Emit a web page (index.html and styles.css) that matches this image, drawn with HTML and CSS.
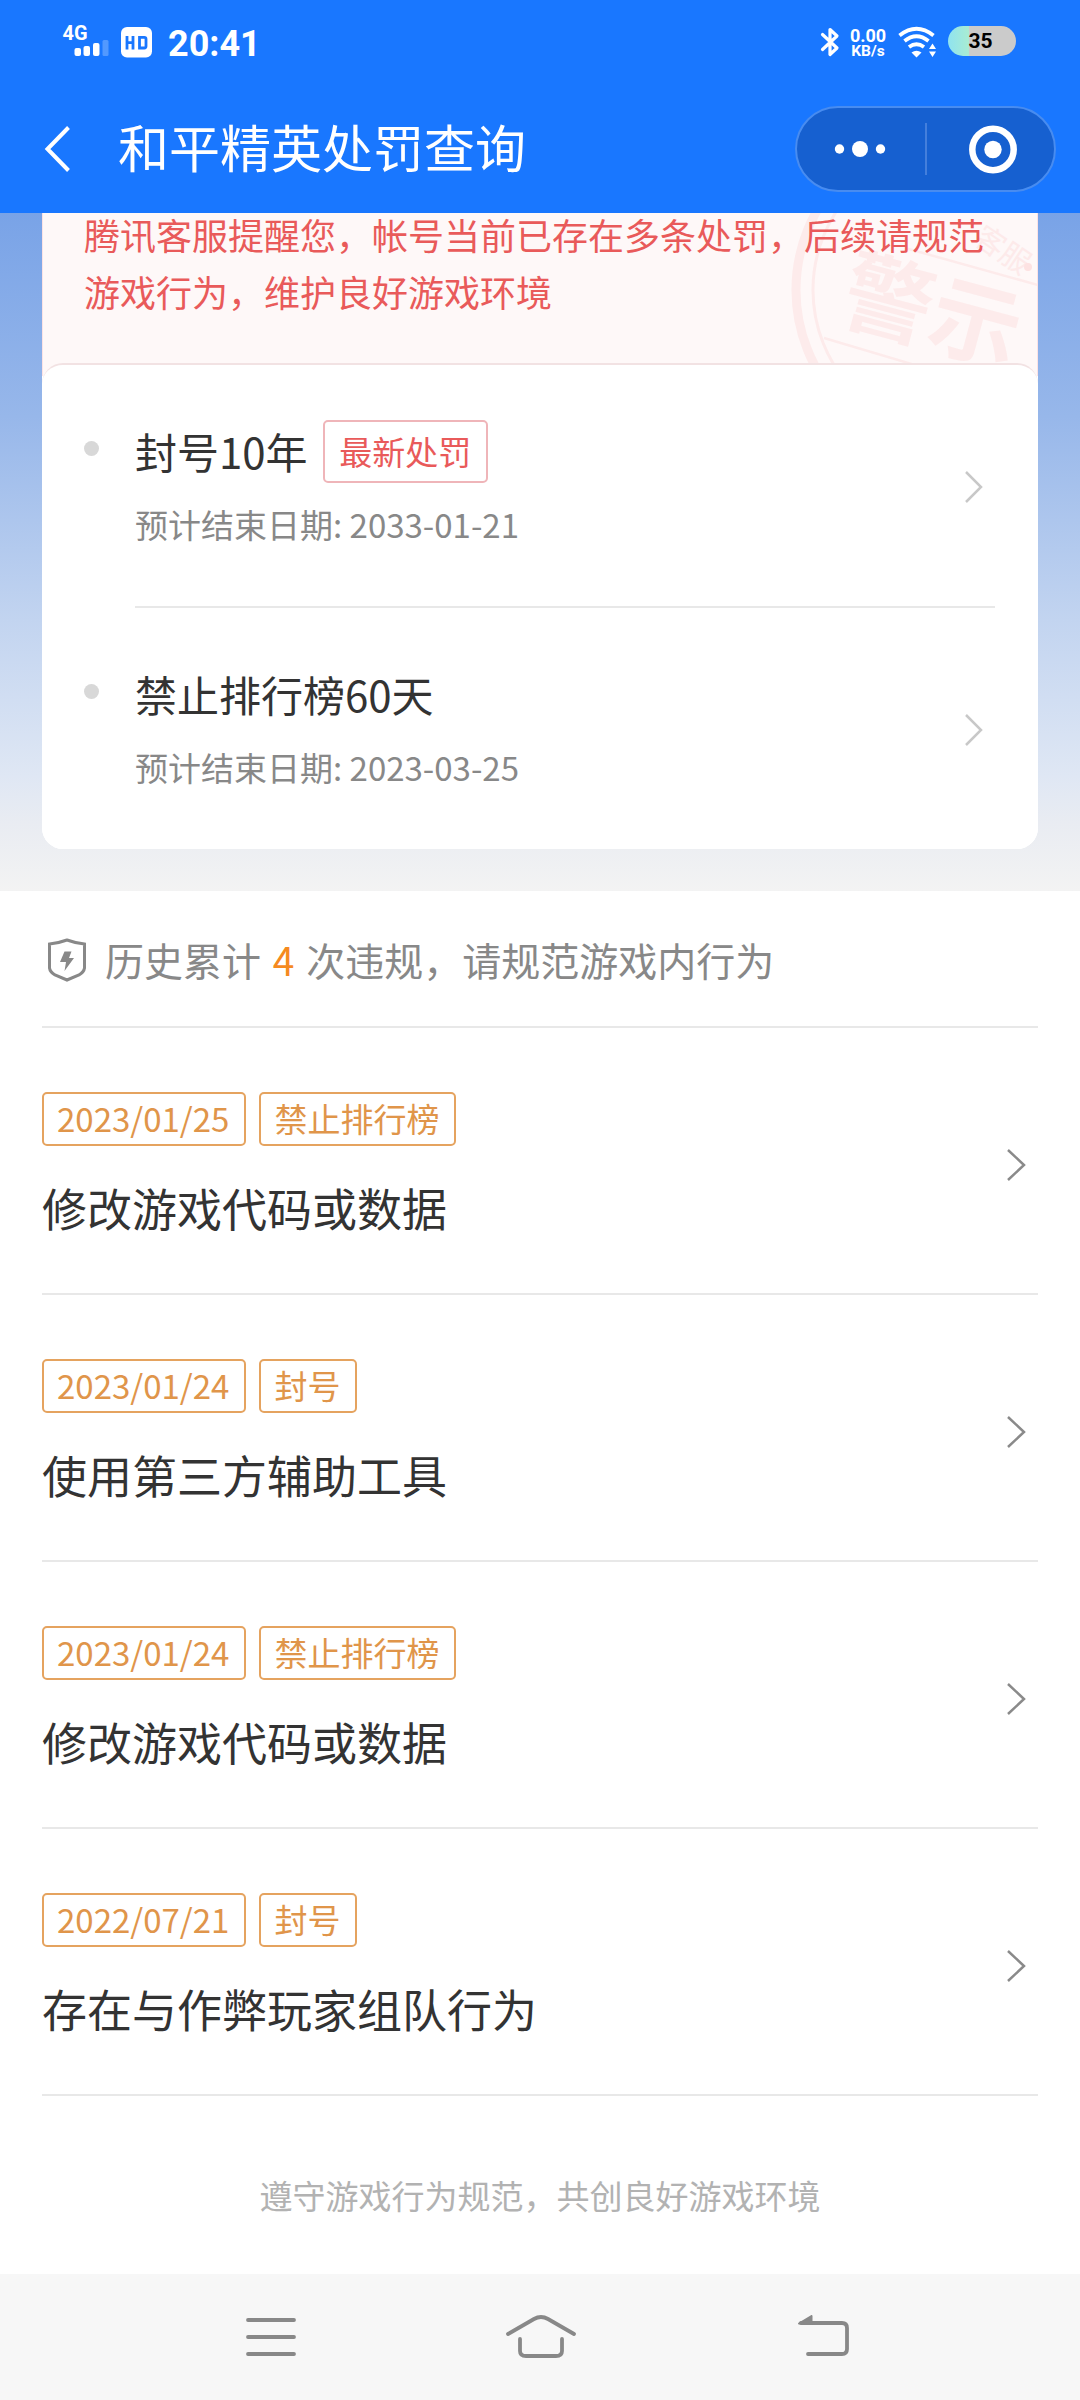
FILE: index.html
```html
<!DOCTYPE html>
<html lang="zh-CN">
<head>
<meta charset="utf-8">
<title>和平精英处罚查询</title>
<link rel="stylesheet" href="styles.css">
</head>
<body>
<div class="screen">
  <header class="header">
    <div class="status">
      <div class="status-left">
        <svg class="signal" width="47" height="44" viewBox="0 -6 47 44">
          <text class="signal-label" x="0.500" y="15" textLength="25" lengthAdjust="spacingAndGlyphs">4G</text>
          <g fill="#fff"><rect x="12.500" y="23" width="6.500" height="8" rx="2"/><rect x="21.500" y="21" width="6.500" height="10" rx="2"/><rect x="31" y="18" width="6.500" height="13" rx="2"/><rect x="40.500" y="15" width="6" height="16" rx="1.500" opacity=".25"/></g>
        </svg>
        <svg class="hd" width="31" height="31" viewBox="0 0 31 31">
          <rect width="31" height="30.500" rx="6" fill="#fff"/>
          <path d="M6 9v13.500M12 9v13.500M6 15.700h6M18.500 10.400h4.800q1.700 0 1.700 1.700v7.200q0 1.700-1.700 1.700h-4.800z" fill="none" stroke="#1977ff" stroke-width="2.800"/>
        </svg>
        <span class="clock">20:41</span>
      </div>
      <div class="status-right">
        <svg width="20" height="32" viewBox="0 0 20 32"><path d="M2.500 8.500L17 22l-7 6.500V3.500L17 10 2.500 23.500" fill="none" stroke="#fff" stroke-width="3.200" stroke-linejoin="round" stroke-linecap="round"/></svg>
        <div class="speed"><span class="speed-num">0.00</span><span class="speed-unit">KB/s</span></div>
        <svg class="wifi" width="40" height="32" viewBox="0 0 40 32">
          <g fill="none" stroke="#fff" stroke-width="3.800"><path d="M1.500 9.500Q18.500-4 35.500 9.500"/><path d="M6.500 15Q18.500 5.500 30.500 15"/><path d="M11 21Q18.500 15.500 26 21"/></g>
          <path d="M13.500 26.500q5-3.500 10 0L18.500 31.500z" fill="#fff"/>
          <path d="M31 23l3.500-5.500L38 23zM31 25.500h7L34.500 31z" fill="#fff"/>
        </svg>
        <span class="battery">35</span>
      </div>
    </div>
    <div class="titlebar">
      <svg class="back" width="28" height="50" viewBox="0 0 28 50"><path d="M24.500 3.500L3.500 25l21 21.500" fill="none" stroke="#fff" stroke-width="4"/></svg>
      <h1 class="title">和平精英处罚查询</h1>
      <div class="capsule">
        <svg width="128" height="84" viewBox="0 0 128 84" fill="#fff"><circle cx="42.500" cy="42" r="4.700"/><circle cx="63" cy="42" r="8"/><circle cx="83.500" cy="42" r="4.700"/></svg>
        <span class="capsule-line"></span>
        <svg width="126" height="84" viewBox="0 0 126 84"><circle cx="66" cy="42.500" r="20.700" fill="none" stroke="#fff" stroke-width="6.500"/><circle cx="66" cy="42.500" r="8.700" fill="#fff"/></svg>
      </div>
    </div>
  </header>

  <section class="hero">
    <div class="panel">
      <div class="notice">
        <svg class="stamp" width="250" height="150" viewBox="788 213 250 150">
          <g fill="none" stroke="#fdebeb">
            <circle cx="957" cy="290" r="161" stroke-width="9"/>
            <circle cx="957" cy="290" r="144" stroke-width="3"/>
            <path d="M905 248L1038 285M824 338L925 368" stroke-width="2.500"/>
          </g>
          <text x="842" y="344" class="stamp-big" transform="rotate(15 932 312)">警示</text>
          <text class="stamp-small" transform="translate(972 242) rotate(34)">客服</text>
          <circle cx="1028" cy="267" r="4" fill="#fde2e2"/>
        </svg>
        <p class="notice-text">腾讯客服提醒您，帐号当前已存在多条处罚，后续请规范<br>游戏行为，维护良好游戏环境</p>
      </div>
      <div class="card">
        <div class="penalty">
          <i class="bullet"></i>
          <div class="penalty-body">
            <div class="penalty-name">封号10年<span class="latest">最新处罚</span></div>
            <div class="penalty-date">预计结束日期: 2033-01-21</div>
          </div>
          <svg class="penalty-arrow" width="20" height="34" viewBox="0 0 20 34"><path d="M2 2l15 15L2 32" /></svg>
        </div>
        <div class="penalty">
          <i class="bullet"></i>
          <div class="penalty-body">
            <div class="penalty-name">禁止排行榜60天</div>
            <div class="penalty-date">预计结束日期: 2023-03-25</div>
          </div>
          <svg class="penalty-arrow" width="20" height="34" viewBox="0 0 20 34"><path d="M2 2l15 15L2 32" /></svg>
        </div>
      </div>
    </div>
  </section>

  <main class="history">
    <div class="summary">
      <svg class="shield" width="40" height="44" viewBox="0 0 40 44"><path d="M20 2Q28 5 37.500 6V30Q37 34 32 37L20 42 8 37Q3 34 2.500 30V6Q12 5 20 2z" fill="none" stroke="#888" stroke-width="3"/><path d="M17.500 13.500h7l-2.500 6.500h5L17.500 33l1.500-9h-6z" fill="#888"/></svg>
      <span class="summary-text">历史累计 <b class="count">4</b> 次违规，请规范游戏内行为</span>
    </div>
    <div class="record">
      <div><div class="tags"><span class="tag">2023/01/25</span><span class="tag">禁止排行榜</span></div><div class="reason">修改游戏代码或数据</div></div>
      <svg class="record-arrow" width="22" height="34" viewBox="0 0 22 34"><path d="M2 2l16 15L2 32"/></svg>
    </div>
    <div class="record">
      <div><div class="tags"><span class="tag">2023/01/24</span><span class="tag">封号</span></div><div class="reason">使用第三方辅助工具</div></div>
      <svg class="record-arrow" width="22" height="34" viewBox="0 0 22 34"><path d="M2 2l16 15L2 32"/></svg>
    </div>
    <div class="record">
      <div><div class="tags"><span class="tag">2023/01/24</span><span class="tag">禁止排行榜</span></div><div class="reason">修改游戏代码或数据</div></div>
      <svg class="record-arrow" width="22" height="34" viewBox="0 0 22 34"><path d="M2 2l16 15L2 32"/></svg>
    </div>
    <div class="record">
      <div><div class="tags"><span class="tag">2022/07/21</span><span class="tag">封号</span></div><div class="reason">存在与作弊玩家组队行为</div></div>
      <svg class="record-arrow" width="22" height="34" viewBox="0 0 22 34"><path d="M2 2l16 15L2 32"/></svg>
    </div>
    <p class="slogan">遵守游戏行为规范，共创良好游戏环境</p>
  </main>

  <nav class="navbar">
    <svg width="50" height="44" viewBox="0 0 50 44"><path d="M2 5h46M2 22h46M2 39h46"/></svg>
    <svg width="70" height="44" viewBox="0 0 70 44"><path d="M2 19L28 4Q35 0 42 4L68 19M14 24V36Q14 41 20 41H50Q56 41 56 36V24"/></svg>
    <svg width="51" height="44" viewBox="0 0 51 44"><path d="M3 8H44Q49 8 49 13V34Q49 39 44 39H10"/><path d="M1 8.500L13.500 1v7.500z" stroke-width="2" fill="#888"/></svg>
  </nav>
</div>
</body>
</html>
```
FILE: styles.css
```css
* { box-sizing: border-box; }
body, h1, p { margin: 0; }
svg { display: block; flex: none; }
body { font-family: "Noto Sans CJK SC", sans-serif; color: #333; background: #fff; }
.screen { width: 1080px; height: 2400px; display: flex; flex-direction: column; overflow: hidden; }

.header { height: 213px; flex: none; background: #1977ff; color: #fff; }
.status { height: 84px; display: flex; justify-content: space-between; padding: 0 64px 0 62px; font-family: Roboto, sans-serif; font-weight: 700; }
.status-left, .status-right { display: flex; align-items: center; }
.signal { margin-bottom: 3px; }
.signal-label { font-size: 21px; fill: #fff; }
.hd { margin-left: 12px; }
.clock { margin-left: 16px; font-size: 36px; line-height: 42px; margin-top: 3px; }
.speed { display: flex; flex-direction: column; align-items: center; margin: 0 12px 0 10px; width: 36px; }
.speed-num { font-size: 18px; line-height: 17px; }
.speed-unit { font-size: 15.500px; line-height: 14px; }
.wifi { margin-right: 10px; }
.battery { width: 68px; height: 30px; margin-top: -2px; border-radius: 15px; background: linear-gradient(90deg, #8fe3f0 0, #a9ecd2 21px, #cbcbcb 21px); color: #000; font-size: 21px; line-height: 30px; text-align: center; padding-right: 3px; }

.titlebar { height: 129px; display: flex; align-items: center; padding: 0 24px 0 44px; }
.title { margin-left: 46px; font-size: 51px; font-weight: 400; line-height: 74px; margin-top: -6px; }
.capsule { margin-left: auto; width: 261px; height: 86px; border: 2px solid #488cf0; border-radius: 43px; background: #1660d0; display: flex; align-items: center; }
.capsule-line { width: 1.500px; height: 52px; background: #447fdc; }

.hero { height: 678px; flex: none; padding: 0 42px; background: linear-gradient(#79a3e7 0, #97b7ea 30%, #c2d4f0 60%, #dfe7f4 83%, #e9ecf2 90%, #f3f3f3 100%); }
.panel { height: 636px; background: #fff; border-radius: 0 0 21px 21px; }
.notice { height: 163px; background: #fef8f8; border: solid #fbe2e4; border-width: 0 1.500px; overflow: hidden; position: relative; }
.stamp { position: absolute; right: -1px; top: 0; }
.stamp-big { font-size: 90px; font-weight: 700; fill: #fdebeb; }
.stamp-small { font-size: 30px; fill: #fdeaea; }
.notice-text { position: relative; margin-top: -7px; padding-left: 41px; font-size: 36px; line-height: 56.500px; color: #e95a5a; white-space: nowrap; }
.card { position: relative; margin-top: -13px; height: 486px; border-top: 2px solid #f2e2e3; border-radius: 21px; background: #fff; padding: 0 42px; }
.penalty { height: 243px; display: flex; align-items: flex-start; }
.bullet { width: 15px; height: 15px; border-radius: 50%; background: #d8d8d8; margin: 76px 36px 0 0; }
.penalty-body { flex: 1; height: 243px; padding-top: 55px; }
.penalty:first-child .penalty-body { border-bottom: 2px solid #e8e8e8; }
.penalty-name { height: 63px; display: flex; align-items: center; font-size: 42px; line-height: 60px; padding-bottom: 1px; }
.latest { height: 63px; width: 165px; margin: 1px 0 0 15px; border: 2px solid #efb5b9; border-radius: 5px; color: #e95a5a; font-size: 33px; line-height: 59px; text-align: center; }
.penalty-date { margin-top: 17px; font-size: 33px; line-height: 48px; color: #888; }
.penalty-arrow { margin: 105px 12px 0 -31px; stroke: #c8c8c8; stroke-width: 2.500px; fill: none; }

.history { flex: 1; padding: 0 42px; }
.summary { height: 137px; border-bottom: 2px solid #e8e8e8; display: flex; align-items: center; padding: 1px 0 0 5px; font-size: 39px; line-height: 58px; color: #888; }
.summary-text { margin-left: 18px; }
.shield { width: 40px; height: 44px; margin-top: 2px; }
.count { margin: 0 3px; font-weight: 400; color: #f58a1f; }
.record { height: 267px; border-bottom: 2px solid #e8e8e8; display: flex; justify-content: space-between; align-items: flex-start; }
.tags { display: flex; gap: 13px; margin-top: 64px; }
.tag { height: 54px; border: 2px solid #e5a35f; border-radius: 5px; padding: 0 15px 0 13px; font-size: 33px; line-height: 48px; color: #e0954a; }
.reason { margin-top: 29px; font-size: 45px; line-height: 66px; }
.record-arrow { margin: 120px 10px 0 0; stroke: #8a8a8a; stroke-width: 2.500px; fill: none; }
.slogan { margin-top: 75px; text-align: center; font-size: 33px; line-height: 48px; color: #b2b2b2; }

.navbar { height: 126px; flex: none; background: #f7f7f7; display: flex; align-items: flex-start; padding: 41px 0 0 246px; }
.navbar svg { stroke: #888; stroke-width: 3.800px; fill: none; stroke-linecap: round; stroke-linejoin: round; }
.navbar svg:nth-child(2) { margin-left: 210px; }
.navbar svg:nth-child(3) { margin-left: 222px; }
```
